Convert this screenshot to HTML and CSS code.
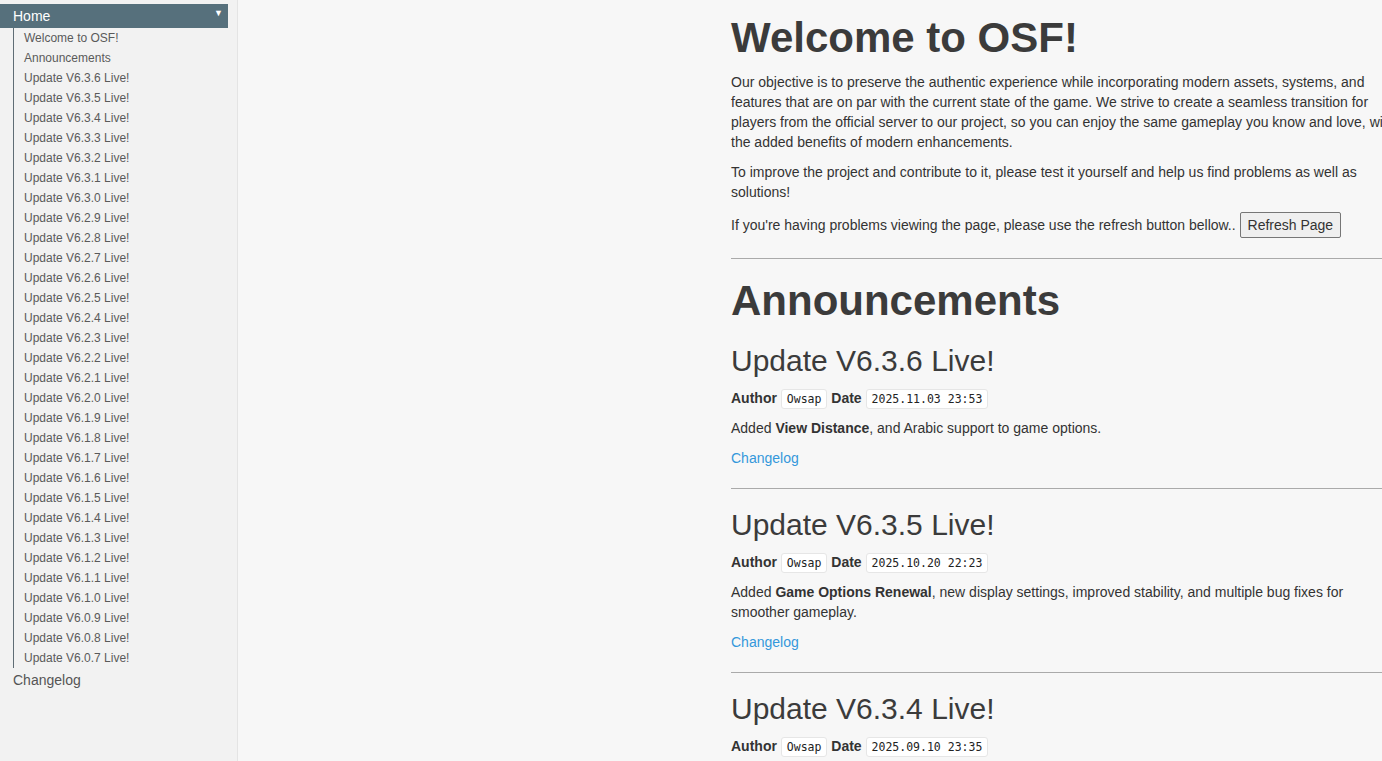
FILE: index.html
```html
<!DOCTYPE html>
<html lang="en">
<head>
    <meta charset="UTF-8">
    <meta name="viewport" content="width=device-width, initial-scale=1.0">
    <title>OSF - Home</title>
    <link rel="stylesheet" href="styles.css">
</head>
<body>
    <div id="sidebar">
        <div class="navHeader">
            <span>Home</span>
            <span class="navArrow">&#9660;</span>
        </div>
        <ul class="navList">
            <li>Welcome to OSF!</li>
            <li>Announcements</li>
            <li>Update V6.3.6 Live!</li>
            <li>Update V6.3.5 Live!</li>
            <li>Update V6.3.4 Live!</li>
            <li>Update V6.3.3 Live!</li>
            <li>Update V6.3.2 Live!</li>
            <li>Update V6.3.1 Live!</li>
            <li>Update V6.3.0 Live!</li>
            <li>Update V6.2.9 Live!</li>
            <li>Update V6.2.8 Live!</li>
            <li>Update V6.2.7 Live!</li>
            <li>Update V6.2.6 Live!</li>
            <li>Update V6.2.5 Live!</li>
            <li>Update V6.2.4 Live!</li>
            <li>Update V6.2.3 Live!</li>
            <li>Update V6.2.2 Live!</li>
            <li>Update V6.2.1 Live!</li>
            <li>Update V6.2.0 Live!</li>
            <li>Update V6.1.9 Live!</li>
            <li>Update V6.1.8 Live!</li>
            <li>Update V6.1.7 Live!</li>
            <li>Update V6.1.6 Live!</li>
            <li>Update V6.1.5 Live!</li>
            <li>Update V6.1.4 Live!</li>
            <li>Update V6.1.3 Live!</li>
            <li>Update V6.1.2 Live!</li>
            <li>Update V6.1.1 Live!</li>
            <li>Update V6.1.0 Live!</li>
            <li>Update V6.0.9 Live!</li>
            <li>Update V6.0.8 Live!</li>
            <li>Update V6.0.7 Live!</li>
        </ul>
        <div class="navItem">Changelog</div>
    </div>

    <div id="content">
        <h1>Welcome to OSF!</h1>
        <p>Our objective is to preserve the authentic experience while incorporating modern assets, systems, and features that are on par with the current state of the game. We strive to create a seamless transition for players from the official server to our project, so you can enjoy the same gameplay you know and love, with the added benefits of modern enhancements.</p>
        <p>To improve the project and contribute to it, please test it yourself and help us find problems as well as solutions!</p>
        <p>If you're having problems viewing the page, please use the refresh button bellow.. <button class="refreshButton">Refresh Page</button></p>

        <hr>

        <h2>Announcements</h2>

        <div class="post">
            <h3>Update V6.3.6 Live!</h3>
            <div class="meta"><b>Author</b> <code>Owsap</code> <b>Date</b> <code>2025.11.03 23:53</code></div>
            <p>Added <b>View Distance</b>, and Arabic support to game options.</p>
            <p><a href="#">Changelog</a></p>
        </div>

        <hr>

        <div class="post">
            <h3>Update V6.3.5 Live!</h3>
            <div class="meta"><b>Author</b> <code>Owsap</code> <b>Date</b> <code>2025.10.20 22:23</code></div>
            <p>Added <b>Game Options Renewal</b>, new display settings, improved stability, and multiple bug fixes for smoother gameplay.</p>
            <p><a href="#">Changelog</a></p>
        </div>

        <hr>

        <div class="post">
            <h3>Update V6.3.4 Live!</h3>
            <div class="meta"><b>Author</b> <code>Owsap</code> <b>Date</b> <code>2025.09.10 23:35</code></div>
        </div>
    </div>
</body>
</html>
```

FILE: styles.css
```css
html, body {
    margin: 0;
    height: 100%;
    overflow: hidden;
}

body {
    display: flex;
    font-family: "Liberation Sans", Arial, sans-serif;
    font-size: 14px;
    color: #333;
    background-color: #f7f7f7;
}

#sidebar {
    width: 238px;
    flex-shrink: 0;
    min-height: 100vh;
    padding-top: 4px;
    box-sizing: border-box;
    background-color: #f2f2f2;
    border-right: 1px solid #e4e4e4;
}

.navHeader {
    display: flex;
    justify-content: space-between;
    align-items: center;
    width: 228px;
    height: 24px;
    padding: 0 5px 0 13px;
    box-sizing: border-box;
    background-color: #56707c;
    color: white;
    font-size: 14px;
}

.navArrow {
    font-size: 9px;
    margin-top: -6px;
}

.navList {
    list-style: none;
    margin: 0 0 0 13px;
    padding: 0 0 0 10px;
    border-left: 1px solid #5f6d75;
}

.navList li {
    font-size: 12px;
    line-height: 20px;
    color: #5a5a5a;
}

.navItem {
    padding-left: 13px;
    line-height: 24px;
    font-size: 14px;
    color: #555;
}

#content {
    width: 670px;
    flex-shrink: 0;
    padding-left: 493px;
}

h1 {
    font-size: 42px;
    line-height: 46px;
    margin: 15px 0 11px;
    color: #3b3b3b;
}

h2 {
    font-size: 42px;
    line-height: 44px;
    margin: 20px 0 21px;
    color: #3b3b3b;
}

h3 {
    font-size: 30px;
    line-height: 34px;
    font-weight: normal;
    margin: 19px 0 10px;
    color: #3b3b3b;
}

p {
    margin: 10px 0;
    line-height: 20px;
}

.refreshButton {
    font-family: "Liberation Sans", Arial, sans-serif;
    font-size: 14px;
    color: #333;
    height: 26px;
    padding: 0 7px;
    background-color: #efefef;
    border: 1px solid #767676;
    border-radius: 2px;
}

hr {
    border: none;
    border-top: 1px solid #aaa;
    margin: 20px 0 19px;
}

.meta {
    height: 20px;
    line-height: 20px;
}

.meta b {
    color: #333;
}

code {
    display: inline-block;
    font-family: "DejaVu Sans Mono", monospace;
    font-size: 11.5px;
    line-height: 14px;
    padding: 2px 5px;
    background-color: white;
    border: 1px solid #e6e6e6;
    border-radius: 3px;
    vertical-align: middle;
    color: #222;
}

a {
    color: #3498db;
    text-decoration: none;
}
```
